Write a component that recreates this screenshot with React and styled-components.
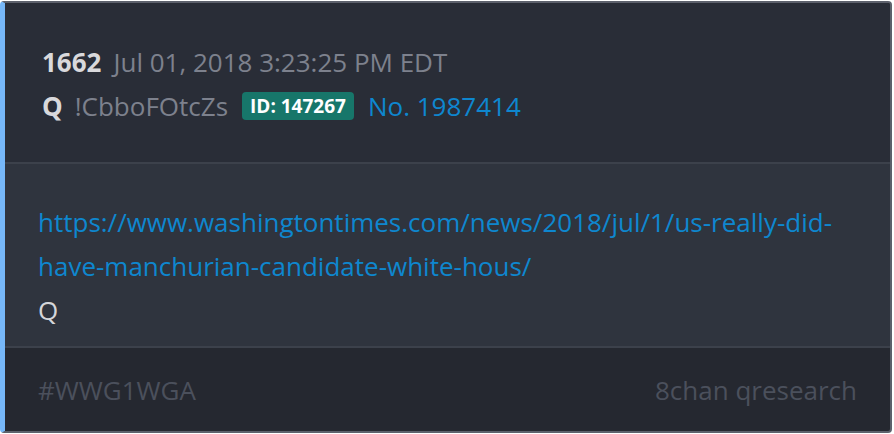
import React from "react";
import styled, { createGlobalStyle } from "styled-components";

const GlobalStyle = createGlobalStyle`
  html, body {
    margin: 0;
    padding: 0;
    background: #ffffff;
  }
  body {
    font-family: "Open Sans", "DejaVu Sans", sans-serif;
  }
`;

const Page = styled.div`
  padding: 1px 2px 1px 0;
`;

const Card = styled.article`
  display: flex;
  flex-direction: column;
  height: 432px;
  box-sizing: border-box;
  border: 2px solid #5d616c;
  border-left: 5px solid #76b7f8;
  border-radius: 4px;
  overflow: hidden;
  background: #252830;
`;

const Header = styled.header`
  background: #292d37;
  padding: 37px 37px 34px;
  border-bottom: 2px solid #3c414b;
`;

const MetaRow = styled.div`
  display: flex;
  align-items: center;
  gap: 14px;
  height: 44px;
  font-size: 26px;
`;

const PostNum = styled.span`
  font-weight: 700;
  color: #d9d9dc;
  margin-right: -2px;
`;

const Muted = styled.span`
  color: #7d818d;
`;

const Badge = styled.span`
  display: inline-flex;
  align-items: center;
  height: 28px;
  padding: 0 8px;
  border-radius: 4px;
  background: #17766a;
  color: #ffffff;
  font-size: 19px;
  font-weight: 700;
`;

const PostLink = styled.a`
  color: #0e87cf;
  text-decoration: none;
`;

const Body = styled.section`
  flex: 0 0 auto;
  background: #2f343e;
  padding: 36px 33px 14px;
  border-bottom: 2px solid #3c414b;
  font-size: 26px;
  line-height: 44px;
`;

const BodyLink = styled.a`
  display: block;
  color: #0e87cf;
  text-decoration: none;
  word-break: break-all;
`;

const Signature = styled.div`
  color: #d5d6da;
`;

const Footer = styled.footer`
  flex: 1;
  display: flex;
  align-items: center;
  justify-content: space-between;
  padding: 0 33px;
  font-size: 26px;
  color: #4b505c;
`;

export default function App() {
  return (
    <Page>
      <GlobalStyle />
      <Card>
        <Header>
          <MetaRow>
            <PostNum>1662</PostNum>
            <Muted>Jul 01, 2018 3:23:25 PM EDT</Muted>
          </MetaRow>
          <MetaRow>
            <PostNum>Q</PostNum>
            <Muted>!CbboFOtcZs</Muted>
            <Badge>ID: 147267</Badge>
            <PostLink href="#">No. 1987414</PostLink>
          </MetaRow>
        </Header>
        <Body>
          <BodyLink href="#">
            https://www.washingtontimes.com/news/2018/jul/1/us-really-did-
            <br />
            have-manchurian-candidate-white-hous/
          </BodyLink>
          <Signature>Q</Signature>
        </Body>
        <Footer>
          <span>#WWG1WGA</span>
          <span>8chan qresearch</span>
        </Footer>
      </Card>
    </Page>
  );
}
